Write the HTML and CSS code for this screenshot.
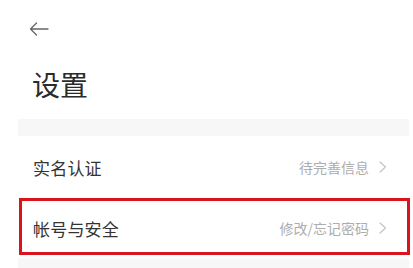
FILE: index.html
```html
<!DOCTYPE html>
<html lang="zh-CN">
<head>
<meta charset="utf-8">
<link rel="stylesheet" href="styles.css">
</head>
<body>
<div class="page">
  <div class="topbar">
    <svg class="back" width="20" height="14" viewBox="0 0 20 14"><path d="M19 7H1.5M7.5 1L1.5 7l6 6" fill="none" stroke="#666" stroke-width="1.3" stroke-linecap="round" stroke-linejoin="round"/></svg>
  </div>
  <h1 class="title">设置</h1>
  <div class="list">
    <div class="gap"></div>
    <div class="row">
      <span class="label">实名认证</span>
      <span class="value">待完善信息<svg class="chev" width="10" height="12" viewBox="0 0 10 12"><path d="M2 1l5.5 5L2 11" fill="none" stroke="#c4c4c4" stroke-width="1.2" stroke-linecap="round" stroke-linejoin="round"/></svg></span>
    </div>
    <div class="row highlighted">
      <span class="label">帐号与安全</span>
      <span class="value">修改/忘记密码<svg class="chev" width="10" height="12" viewBox="0 0 10 12"><path d="M2 1l5.5 5L2 11" fill="none" stroke="#c4c4c4" stroke-width="1.2" stroke-linecap="round" stroke-linejoin="round"/></svg></span>
    </div>
    <div class="gap bottom"></div>
  </div>
</div>
</body>
</html>
```
FILE: styles.css
```css
html, body {
  margin: 0;
  padding: 0;
  background: #fff;
}
body {
  font-family: "Noto Sans CJK SC", "Noto Sans", sans-serif;
  width: 413px;
  height: 268px;
  overflow: hidden;
}
.page {
  padding: 0 4px 0 18px;
}
.topbar {
  height: 44px;
  display: flex;
  align-items: flex-start;
  padding-top: 22px;
  box-sizing: border-box;
  padding-left: 11px;
}
.back {
  display: block;
}
.title {
  margin: 0;
  padding-left: 14px;
  font-size: 28px;
  font-weight: 400;
  color: #2b2b2b;
  line-height: 40px;
  height: 75px;
  box-sizing: border-box;
  padding-top: 20px;
}
.list {
  display: flex;
  flex-direction: column;
}
.gap {
  height: 17px;
  background: #f7f7f8;
  margin-right: 0;
}
.gap.bottom {
  height: 12px;
}
.row {
  height: 62px;
  display: flex;
  align-items: center;
  justify-content: space-between;
  padding: 0 21px 0 15px;
  box-sizing: border-box;
}
.row.highlighted {
  height: 60px;
  position: relative;
}
.row.highlighted::after {
  content: "";
  position: absolute;
  left: 1px;
  right: -1px;
  top: 0;
  height: 57px;
  border: 3px solid #d9141c;
  box-sizing: border-box;
}
.label {
  font-size: 17px;
  color: #333;
  letter-spacing: 0.2px;
}
.value {
  display: flex;
  align-items: center;
  font-size: 14px;
  color: #adadad;
}
.chev {
  margin-left: 9px;
  display: block;
}
```
